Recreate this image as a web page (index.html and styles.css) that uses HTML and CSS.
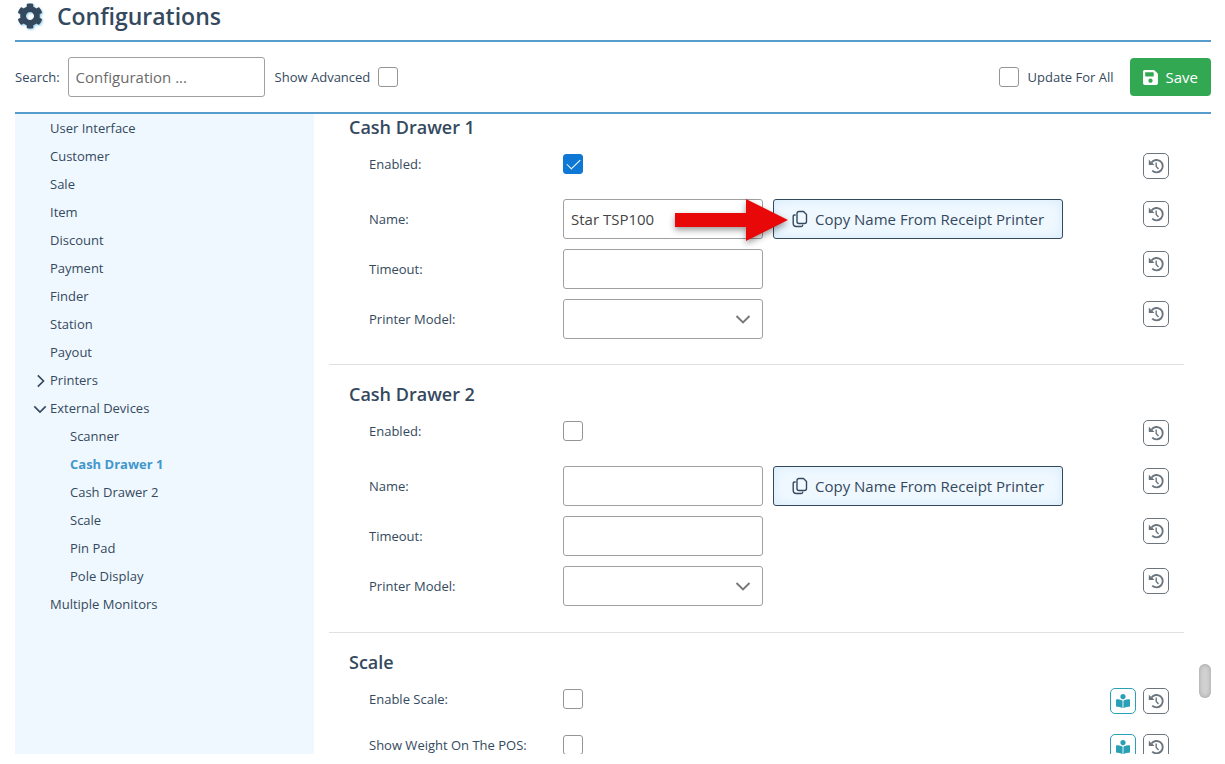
FILE: index.html
```html
<!DOCTYPE html>
<html lang="en">

<head>
    <meta charset="utf-8">
    <meta name="viewport" content="width=device-width, initial-scale=1.0">
    <title>Configurations</title>
    <link rel="stylesheet" href="styles.css">
</head>

<body>

    <!-- shared icons -->
    <svg class="sprite" aria-hidden="true">
        <symbol id="icon-history" viewBox="0 0 16 16">
            <path d="M3.500 4.500A6.200 6.200 0 1 1 4.200 12.600" fill="none" stroke="currentColor" stroke-width="1.900"/>
            <path d="M.8 1.500v5.500h5.700L4.600 5 3 4z"/>
            <path d="M8.200 4.500v4l2.300 2.500" fill="none" stroke="currentColor" stroke-width="1.400"/>
        </symbol>
        <symbol id="icon-reader" viewBox="0 0 512 512">
            <path d="M352 96c0-53.02-42.98-96-96-96s-96 42.98-96 96 42.98 96 96 96 96-42.98 96-96zM233.59 241.1c-59.33-36.32-155.43-46.3-203.79-49.05C13.55 191.13 0 203.51 0 219.14v222.8c0 14.33 11.59 26.28 26.49 27.05 43.66 2.29 131.99 10.68 193.04 41.43 9.37 4.72 20.48-1.71 20.48-11.87V252.56c-.01-4.67-2.32-8.95-6.42-11.46zm248.61-49.05c-48.35 2.74-144.46 12.73-203.78 49.05-4.1 2.51-6.41 6.96-6.41 11.63v245.79c0 10.19 11.14 16.63 20.54 11.9 61.04-30.72 149.32-39.11 192.97-41.4 14.9-.78 26.49-12.73 26.49-27.06V219.14c-.01-15.63-13.56-28.01-29.81-27.09z"/>
        </symbol>
        <symbol id="icon-copy" viewBox="0 0 16 18">
            <path d="M7 1.500h4.500l3 3v7a2 2 0 0 1-2 2H7a2 2 0 0 1-2-2v-8a2 2 0 0 1 2-2z" fill="none" stroke="currentColor" stroke-width="1.400" stroke-linejoin="round"/>
            <path d="M3.200 5H2.500C1.700 5 1.200 5.500 1.200 6.300v7c0 2 1.200 3.200 3.200 3.200h4.800c.8 0 1.300-.4 1.500-1.200" fill="none" stroke="currentColor" stroke-width="1.400" stroke-linecap="round"/>
        </symbol>
        <symbol id="icon-down" viewBox="0 0 16 16">
            <path d="M1.500 5l6.500 6.500 6.500-6.500" fill="none" stroke="currentColor" stroke-width="1.900"/>
        </symbol>
        <symbol id="icon-right" viewBox="0 0 16 16">
            <path d="M5.500 1.500l6.500 6.500-6.500 6.500" fill="none" stroke="currentColor" stroke-width="1.900"/>
        </symbol>
    </svg>

    <div class="page">
        <header class="header">
            <svg class="gear" viewBox="0 0 512 512" aria-hidden="true">
                <path d="M487.4 315.7l-42.6-24.6c4.3-23.2 4.3-47 0-70.2l42.6-24.6c4.9-2.8 7.1-8.6 5.5-14-11.1-35.6-30-67.8-54.7-94.6-3.8-4.1-10-5.1-14.8-2.3L380.8 110c-17.9-15.4-38.5-27.3-60.8-35.1V25.8c0-5.6-3.9-10.5-9.4-11.7-36.7-8.2-74.3-7.8-109.2 0-5.5 1.2-9.4 6.1-9.4 11.7V75c-22.2 7.9-42.8 19.8-60.8 35.1L88.7 85.5c-4.9-2.8-11-1.9-14.8 2.3-24.7 26.7-43.6 58.9-54.7 94.6-1.7 5.4.6 11.2 5.5 14L67.3 221c-4.3 23.2-4.3 47 0 70.2l-42.6 24.6c-4.9 2.8-7.1 8.6-5.5 14 11.1 35.6 30 67.8 54.7 94.6 3.8 4.1 10 5.1 14.8 2.3l42.6-24.6c17.9 15.4 38.5 27.3 60.8 35.1v49.2c0 5.6 3.9 10.5 9.4 11.7 36.7 8.2 74.3 7.8 109.2 0 5.5-1.2 9.4-6.1 9.4-11.7v-49.2c22.2-7.9 42.8-19.8 60.8-35.1l42.6 24.6c4.9 2.8 11 1.9 14.8-2.3 24.7-26.7 43.6-58.9 54.7-94.6 1.5-5.5-.7-11.3-5.6-14.1zM256 336c-44.1 0-80-35.9-80-80s35.9-80 80-80 80 35.9 80 80-35.9 80-80 80z"/>
            </svg>
            <h1>Configurations</h1>
        </header>

        <div class="toolbar">
            <label for="search">Search:</label>
            <input class="textbox search" id="search" type="text" placeholder="Configuration ...">
            <label class="advanced" for="advanced">Show Advanced</label>
            <input class="check" id="advanced" type="checkbox">
            <input class="check update-all" id="update-all" type="checkbox">
            <label for="update-all">Update For All</label>
            <button class="save" type="button">
                <svg viewBox="0 0 448 512" aria-hidden="true">
                    <path d="M433.941 129.941l-83.882-83.882A48 48 0 0 0 316.118 32H48C21.49 32 0 53.49 0 80v352c0 26.51 21.49 48 48 48h352c26.51 0 48-21.49 48-48V163.882a48 48 0 0 0-14.059-33.941zM224 416c-35.346 0-64-28.654-64-64 0-35.346 28.654-64 64-64s64 28.654 64 64c0 35.346-28.654 64-64 64zm96-304.52V212c0 6.627-5.373 12-12 12H76c-6.627 0-12-5.373-12-12V108c0-6.627 5.373-12 12-12h228.52c3.183 0 6.235 1.264 8.485 3.515l3.48 3.48A11.996 11.996 0 0 1 320 111.48z"/>
                </svg>
                Save
            </button>
        </div>

        <div class="body">
            <nav class="sidebar">
                <ul class="tree">
                    <li><a href="#">User Interface</a></li>
                    <li><a href="#">Customer</a></li>
                    <li><a href="#">Sale</a></li>
                    <li><a href="#">Item</a></li>
                    <li><a href="#">Discount</a></li>
                    <li><a href="#">Payment</a></li>
                    <li><a href="#">Finder</a></li>
                    <li><a href="#">Station</a></li>
                    <li><a href="#">Payout</a></li>
                    <li><a href="#"><svg><use href="#icon-right"/></svg>Printers</a></li>
                    <li>
                        <a href="#"><svg><use href="#icon-down"/></svg>External Devices</a>
                        <ul>
                            <li><a href="#">Scanner</a></li>
                            <li><a class="current" href="#drawer1">Cash Drawer 1</a></li>
                            <li><a href="#drawer2">Cash Drawer 2</a></li>
                            <li><a href="#scale">Scale</a></li>
                            <li><a href="#">Pin Pad</a></li>
                            <li><a href="#">Pole Display</a></li>
                        </ul>
                    </li>
                    <li><a href="#">Multiple Monitors</a></li>
                </ul>
            </nav>

            <main class="content">
                <section class="section" id="drawer1">
                    <h2>Cash Drawer 1</h2>
                    <div class="row row-check">
                        <label for="enabled1">Enabled:</label>
                        <div class="field"><input class="check" id="enabled1" type="checkbox" checked></div>
                        <div class="actions">
                            <button class="icon-btn" type="button" aria-label="History"><svg><use href="#icon-history"/></svg></button>
                        </div>
                    </div>
                    <div class="row row-name">
                        <label for="name1">Name:</label>
                        <div class="field">
                            <input class="textbox" id="name1" type="text" value="Star TSP100">
                            <button class="copy" type="button"><svg><use href="#icon-copy"/></svg>Copy Name From Receipt Printer</button>
                            <svg class="pointer" viewBox="0 0 113 42" aria-hidden="true">
                                <path d="M0 14h71V0l42 21-42 21V28H0z"/>
                            </svg>
                        </div>
                        <div class="actions">
                            <button class="icon-btn" type="button" aria-label="History"><svg><use href="#icon-history"/></svg></button>
                        </div>
                    </div>
                    <div class="row">
                        <label for="timeout1">Timeout:</label>
                        <div class="field"><input class="textbox" id="timeout1" type="text"></div>
                        <div class="actions">
                            <button class="icon-btn" type="button" aria-label="History"><svg><use href="#icon-history"/></svg></button>
                        </div>
                    </div>
                    <div class="row">
                        <label for="model1">Printer Model:</label>
                        <div class="field">
                            <select class="textbox" id="model1"><option></option></select>
                            <svg class="caret"><use href="#icon-down"/></svg>
                        </div>
                        <div class="actions">
                            <button class="icon-btn" type="button" aria-label="History"><svg><use href="#icon-history"/></svg></button>
                        </div>
                    </div>
                </section>

                <section class="section" id="drawer2">
                    <h2>Cash Drawer 2</h2>
                    <div class="row row-check">
                        <label for="enabled2">Enabled:</label>
                        <div class="field"><input class="check" id="enabled2" type="checkbox"></div>
                        <div class="actions">
                            <button class="icon-btn" type="button" aria-label="History"><svg><use href="#icon-history"/></svg></button>
                        </div>
                    </div>
                    <div class="row row-name">
                        <label for="name2">Name:</label>
                        <div class="field">
                            <input class="textbox" id="name2" type="text">
                            <button class="copy" type="button"><svg><use href="#icon-copy"/></svg>Copy Name From Receipt Printer</button>
                        </div>
                        <div class="actions">
                            <button class="icon-btn" type="button" aria-label="History"><svg><use href="#icon-history"/></svg></button>
                        </div>
                    </div>
                    <div class="row">
                        <label for="timeout2">Timeout:</label>
                        <div class="field"><input class="textbox" id="timeout2" type="text"></div>
                        <div class="actions">
                            <button class="icon-btn" type="button" aria-label="History"><svg><use href="#icon-history"/></svg></button>
                        </div>
                    </div>
                    <div class="row">
                        <label for="model2">Printer Model:</label>
                        <div class="field">
                            <select class="textbox" id="model2"><option></option></select>
                            <svg class="caret"><use href="#icon-down"/></svg>
                        </div>
                        <div class="actions">
                            <button class="icon-btn" type="button" aria-label="History"><svg><use href="#icon-history"/></svg></button>
                        </div>
                    </div>
                </section>

                <section class="section" id="scale">
                    <h2>Scale</h2>
                    <div class="row row-check">
                        <label for="scale-on">Enable Scale:</label>
                        <div class="field"><input class="check" id="scale-on" type="checkbox"></div>
                        <div class="actions">
                            <button class="icon-btn info" type="button" aria-label="Help"><svg><use href="#icon-reader"/></svg></button>
                            <button class="icon-btn" type="button" aria-label="History"><svg><use href="#icon-history"/></svg></button>
                        </div>
                    </div>
                    <div class="row row-check">
                        <label for="weight">Show Weight On The POS:</label>
                        <div class="field"><input class="check" id="weight" type="checkbox"></div>
                        <div class="actions">
                            <button class="icon-btn info" type="button" aria-label="Help"><svg><use href="#icon-reader"/></svg></button>
                            <button class="icon-btn" type="button" aria-label="History"><svg><use href="#icon-history"/></svg></button>
                        </div>
                    </div>
                </section>
            </main>

            <div class="scrollbar"><div class="thumb"></div></div>
        </div>
    </div>

</body>

</html>
```
FILE: styles.css
```css
* {
    box-sizing: border-box;
}

body {
    margin: 0;
    font-family: "Open Sans", "Noto Sans", sans-serif;
    font-size: 13px;
    line-height: 20px;
    color: #34495e;
    background-color: white;
}

button,
input,
select {
    font: inherit;
    color: inherit;
    margin: 0;
}

.sprite {
    display: none;
}

.page {
    display: flex;
    flex-direction: column;
    height: 100vh;
    padding: 0 14px 10px 15px;
}

/* header */

.header {
    display: flex;
    gap: 14px;
    height: 42px;
    padding: 1px 0 0 2px;
    border-bottom: 2px solid #569dcb;
}

.header h1 {
    margin: 0;
    font-size: 23px;
    line-height: 30px;
    font-weight: 600;
}

.gear {
    width: 26px;
    height: 26px;
    margin-top: 2px;
    fill: #34495e;
    filter: drop-shadow(1px 1px 1px #8fc8ec);
}

/* toolbar */

.toolbar {
    display: flex;
    align-items: center;
    height: 72px;
    border-bottom: 2px solid #569dcb;
}

.textbox {
    width: 200px;
    height: 40px;
    padding: 0 7px;
    border: 1px solid #a0a0a0;
    border-radius: 3px;
    background-color: white;
    color: #444;
    font-size: 15px;
    appearance: none;
}

.textbox::placeholder {
    color: #6b6b6b;
    opacity: 1;
}

.search {
    width: 197px;
    margin-left: 8px;
}

.advanced {
    margin: 0 8px 0 10px;
}

.check {
    flex: none;
    display: block;
    width: 20px;
    height: 20px;
    border: 1px solid #959595;
    border-radius: 3px;
    background-color: white;
    appearance: none;
}

.check:checked {
    border-color: #0f78d4;
    background-color: #0f78d4;
}

.check:checked::after {
    content: "";
    display: block;
    width: 12px;
    height: 6px;
    margin: 4px 0 0 3px;
    border: solid white;
    border-width: 0 0 1px 1px;
    transform: rotate(-45deg);
}

.update-all {
    margin: 0 9px 0 auto;
}

.save {
    display: flex;
    align-items: center;
    gap: 8px;
    height: 38px;
    margin-left: 16px;
    padding: 0 13px;
    border: 0;
    border-radius: 4px;
    background-color: #33a853;
    color: white;
    font-size: 15px;
}

.save svg {
    width: 15px;
    height: 17px;
    fill: currentColor;
}

/* tree on the left */

.body {
    display: flex;
    flex: 1;
    min-height: 0;
}

.sidebar {
    flex: 0 0 25%;
    background-color: #f0f8ff;
    overflow: hidden;
}

.tree,
.tree ul {
    margin: 0;
    padding: 0;
    list-style: none;
}

.tree a {
    display: flex;
    align-items: center;
    height: 28px;
    padding-left: 35px;
    color: inherit;
    text-decoration: none;
}

.tree ul a {
    padding-left: 55px;
}

.tree svg {
    width: 14px;
    height: 14px;
    margin: 2px 3px 0 -17px;
}

.tree .current {
    color: #4397cb;
    font-weight: 700;
}

/* settings */

.content {
    flex: 1;
    padding: 0 15px;
    overflow: hidden;
}

.section {
    padding: 17px 15px 26px 20px;
    border-bottom: 1px solid #e0e0e0;
}

.section:first-child {
    padding-top: 1px;
    padding-bottom: 25px;
}

.section h2 {
    margin: 0 0 12px;
    font-size: 18px;
    line-height: 24px;
    font-weight: 600;
}

.row {
    display: grid;
    grid-template-columns: 194px 1fr auto;
    min-height: 40px;
    padding-left: 20px;
}

.row + .row {
    margin-top: 10px;
}

.row > label {
    line-height: 40px;
}

.row-check {
    min-height: 36px;
}

.row-check > label {
    line-height: 26px;
}

.row-check .field {
    padding-top: 3px;
}

.row.row-name {
    margin-top: 12px;
}

.field {
    position: relative;
    display: flex;
    align-items: flex-start;
    gap: 10px;
}

.caret {
    position: absolute;
    top: 12px;
    left: 172px;
    width: 16px;
    height: 16px;
    color: #777;
    pointer-events: none;
}

.copy {
    display: flex;
    align-items: center;
    gap: 7px;
    height: 40px;
    padding: 0 18px;
    border: 1px solid #34495e;
    border-radius: 3px;
    background-color: #f0f8ff;
    box-shadow: inset 0 0 12px #d3ebfa;
    font-size: 15px;
    white-space: nowrap;
}

.copy svg {
    width: 16px;
    height: 18px;
}

/* red arrow lying over the name box */
.pointer {
    position: absolute;
    top: 0;
    left: 112px;
    width: 113px;
    height: 42px;
    fill: #e80808;
    filter: drop-shadow(0 3px 3px rgba(0, 0, 0, .4));
    overflow: visible;
}

.actions {
    display: flex;
    align-items: flex-start;
    gap: 7px;
    padding-top: 2px;
}

.icon-btn {
    display: grid;
    place-items: center;
    width: 26px;
    height: 26px;
    padding: 0;
    border: 1px solid #6c757d;
    border-radius: 5px;
    background-color: white;
    color: #6c757d;
}

.icon-btn svg {
    width: 16px;
    height: 16px;
    fill: currentColor;
}

.info {
    border-color: #2aa0b6;
    color: #2aa0b6;
}

.info svg {
    width: 14px;
    height: 14px;
}

/* scrollbar */

.scrollbar {
    display: flex;
    flex-direction: column;
    width: 12px;
}

.scrollbar::before {
    content: "";
    flex: 0 0 86%;
}

.thumb {
    height: 34px;
    border-radius: 6px;
    background-color: #d2d2d2;
    box-shadow: inset 0 0 5px #a0a0a0;
}
```
